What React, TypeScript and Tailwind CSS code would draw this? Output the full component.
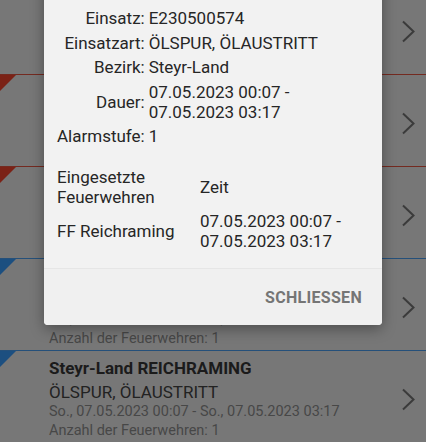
import React from "react"

type Row = {
    color: "red" | "blue"
    bezirk: string
    art: string
    zeit: string
}

const rows: Row[] = [
    { color: "red", bezirk: "Steyr-Land GROSSRAMING", art: "BRANDMELDEALARM", zeit: "So., 07.05.2023 10:12 - So., 07.05.2023 10:45" },
    { color: "red", bezirk: "Steyr-Land TERNBERG", art: "KAMINBRAND", zeit: "So., 07.05.2023 08:31 - So., 07.05.2023 09:20" },
    { color: "red", bezirk: "Steyr-Land GARSTEN", art: "BRAND GEBÄUDE", zeit: "So., 07.05.2023 06:02 - So., 07.05.2023 07:10" },
    { color: "blue", bezirk: "Steyr-Land LOSENSTEIN", art: "FAHRZEUGBERGUNG", zeit: "So., 07.05.2023 02:14 - So., 07.05.2023 03:01" },
    { color: "blue", bezirk: "Steyr-Land REICHRAMING", art: "ÖLSPUR, ÖLAUSTRITT", zeit: "So., 07.05.2023 00:07 - So., 07.05.2023 03:17" },
]

function Chevron() {
    return (
        <svg width="14" height="23" viewBox="0 0 14 23" className="shrink-0">
            <polyline points="2,1.5 12.5,11.5 2,21.5" fill="none" stroke="#3b3b3b" strokeWidth="2" />
        </svg>
    )
}

function ListRow({ row }: { row: Row }) {
    const red = row.color === "red"
    return (
        <div className={`relative flex h-[92px] items-center border-t ${red ? "border-[#742a20]" : "border-[#25507a]"}`}>
            <svg width="16" height="16" viewBox="0 0 16 16" className="absolute left-0 top-0">
                <polygon points="0,0 16,0 0,16" fill={red ? "#7b2216" : "#1c4f80"} />
            </svg>
            <div className="flex-1 pl-[49px] pt-[4px]">
                <div className="text-[17px] leading-[20px] font-bold text-[#1b1b1b]">{row.bezirk}</div>
                <div className="mt-[4px] text-[17px] leading-[20px] text-[#222222]">{row.art}</div>
                <div className="text-[14.5px] leading-[19px] text-[#474747]">{row.zeit}</div>
                <div className="text-[14.5px] leading-[19px] text-[#474747]">Anzahl der Feuerwehren: 1</div>
            </div>
            <div className="pr-[11px] pt-[5px]">
                <Chevron />
            </div>
        </div>
    )
}

function Detail({ label, children }: { label: string; children: React.ReactNode }) {
    return (
        <>
            <div className="self-center text-right">{label}</div>
            <div>{children}</div>
        </>
    )
}

export default function App() {
    return (
        <div className="relative h-[442px] w-[426px] overflow-hidden bg-[#777777]" style={{ fontFamily: "Roboto, 'Noto Sans', sans-serif" }}>
            <div className="mt-[-18px]">
                {rows.map((r, i) => (
                    <ListRow key={i} row={r} />
                ))}
            </div>

            <div className="absolute left-[44px] top-[-20px] w-[338px] rounded-[4px] bg-[#f2f2f2] shadow-[0_4px_14px_rgba(0,0,0,0.35)]">
                <div className="px-[13px] pt-[28px] pb-[17px] text-[17px] leading-[20px] text-[#262626]">
                    <div className="grid grid-cols-[auto_1fr] gap-x-[4px] gap-y-[4.5px]">
                        <Detail label="Einsatz:">E230500574</Detail>
                        <Detail label="Einsatzart:">ÖLSPUR, ÖLAUSTRITT</Detail>
                        <Detail label="Bezirk:">Steyr-Land</Detail>
                        <Detail label="Dauer:">
                            07.05.2023 00:07 -<br />07.05.2023 03:17
                        </Detail>
                        <Detail label="Alarmstufe:">1</Detail>
                    </div>

                    <div className="mt-[21px] grid grid-cols-[143px_1fr] gap-y-[4px]">
                        <div>Eingesetzte<br />Feuerwehren</div>
                        <div className="self-center">Zeit</div>
                        <div className="self-center">FF Reichraming</div>
                        <div>07.05.2023 00:07 -<br />07.05.2023 03:17</div>
                    </div>
                </div>
                <div className="flex h-[57px] items-center justify-end rounded-b-[4px] border-t border-[#e6e6e6] bg-[#f0f0f0] pr-[20px] pt-[2px]">
                    <span className="text-[16px] font-bold tracking-[0.3px] text-[#757575]">SCHLIESSEN</span>
                </div>
            </div>
        </div>
    )
}
